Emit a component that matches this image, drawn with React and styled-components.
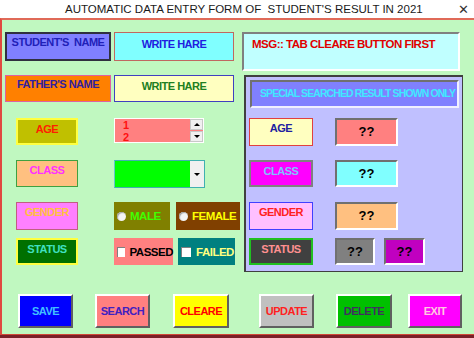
import React from "react";
import styled, { createGlobalStyle } from "styled-components";

const GlobalStyle = createGlobalStyle`
  body {
    margin: 0;
    background: #ffffff;
    font-family: "Liberation Sans", Arial, sans-serif;
  }
`;

const Window = styled.div`
  width: 474px;
  height: 338px;
  overflow: hidden;
  display: flex;
  flex-direction: column;
`;

const TitleBar = styled.div`
  height: 18px;
  display: flex;
  align-items: center;
  background: #ffffff;
`;

const Title = styled.div`
  flex: 1;
  padding-left: 65px;
  font-size: 11.5px;
  color: #1a1a1a;
  white-space: nowrap;
`;

const Close = styled.div`
  width: 22px;
  font-size: 13px;
  color: #333;
  text-align: center;
`;

const Form = styled.div`
  flex: 1;
  background: #c0f8c0;
  border-top: 2px solid #e06a58;
  border-left: 2px solid #e04a40;
  border-bottom: 1px solid #d04838;
  padding: 12px 0 0 3px;
  display: flex;
  flex-direction: column;
  font-weight: bold;
  font-size: 11px;
  letter-spacing: -0.5px;
`;

const BottomStrip = styled.div`
  height: 3px;
  background: #7a2028;
`;

const Main = styled.div`
  display: flex;
`;

const LeftCol = styled.div`
  width: 237px;
  display: flex;
  flex-direction: column;
`;

const RightCol = styled.div`
  width: 221px;
  display: flex;
  flex-direction: column;
`;

const Row = styled.div`
  display: flex;
  align-items: stretch;
  height: ${(p) => p.$h || 27}px;
  margin-top: ${(p) => p.$top || 0}px;
  padding-left: ${(p) => p.$indent || 0}px;
  gap: ${(p) => p.$gap || 3}px;
`;

const Box = styled.div`
  box-sizing: border-box;
  width: ${(p) => p.$w}px;
  background: ${(p) => p.$bg};
  border: ${(p) => p.$bw || 1}px solid ${(p) => p.$border};
  color: ${(p) => p.$color};
  text-align: center;
  padding-top: ${(p) => (p.$pt != null ? p.$pt : 3)}px;
  white-space: nowrap;
  overflow: hidden;
`;

const Spin = styled.div`
  box-sizing: border-box;
  width: 90px;
  height: 25px;
  display: flex;
  background: #ff8080;
  border: 1px solid #ffffff;
`;

const SpinText = styled.div`
  flex: 1;
  padding: 0 0 0 8px;
  color: #ff1010;
  font-size: 11px;
  line-height: 12px;
  overflow: hidden;
`;

const SpinButtons = styled.div`
  width: 13px;
  display: flex;
  flex-direction: column;
  gap: 1px;
`;

const SpinButton = styled.div`
  flex: 1;
  background: #f0f0f0;
  border: 1px solid #c8c8c8;
  display: flex;
  align-items: center;
  justify-content: center;
`;

const Tri = styled.div`
  width: 0;
  height: 0;
  border-left: 3px solid transparent;
  border-right: 3px solid transparent;
  ${(p) =>
    p.$up ? "border-bottom: 3px solid #000;" : "border-top: 3px solid #000;"}
`;

const Combo = styled.div`
  box-sizing: border-box;
  width: 91px;
  height: 28px;
  display: flex;
  background: #00ff00;
  border: 1px solid #40b0b0;
  border-left-color: #60c8c8;
`;

const ComboButton = styled.div`
  width: 14px;
  margin-left: auto;
  background: #f0f0f0;
  display: flex;
  align-items: center;
  justify-content: center;
`;

const Option = styled.div`
  box-sizing: border-box;
  width: ${(p) => p.$w}px;
  background: ${(p) => p.$bg};
  color: ${(p) => p.$color};
  display: flex;
  align-items: center;
  gap: 4px;
  padding-left: 3px;
  font-size: 11.5px;
  white-space: nowrap;
`;

const RadioDot = styled.span`
  width: 9px;
  height: 9px;
  border-radius: 50%;
  background: #f4f4f4;
  box-shadow: inset 1px 1px 1px #a0a0a0;
`;

const CheckSquare = styled.span`
  box-sizing: border-box;
  width: 10px;
  height: 10px;
  background: #ffffff;
  border-top: 1px solid #808080;
  border-left: 1px solid #808080;
  margin-right: 1px;
`;

const MsgBox = styled.div`
  box-sizing: border-box;
  width: 218px;
  height: 39px;
  background: #c0ffff;
  border: 2px solid #ffffff;
  border-top-color: #808080;
  border-left-color: #808080;
  color: #e00000;
  padding: 4px 0 0 8px;
  font-size: 11.5px;
`;

const Panel = styled.div`
  box-sizing: border-box;
  width: 219px;
  height: 197px;
  margin: 4px 0 0 2px;
  background: #c0c0ff;
  border: 1px solid #404040;
  border-top-width: 2px;
  border-left-width: 2px;
  padding: 3px 3px 0 2px;
  display: flex;
  flex-direction: column;
`;

const PanelHeader = styled.div`
  box-sizing: border-box;
  height: 28px;
  margin-left: 2px;
  background: #8080ff;
  border: 2px solid #f0f0ff;
  border-top-color: #707070;
  border-left-color: #707070;
  color: #40e8ff;
  padding: 5px 0 0 8px;
  font-size: 10.5px;
  letter-spacing: -0.9px;
  white-space: nowrap;
  overflow: hidden;
`;

const Value = styled.div`
  box-sizing: border-box;
  width: ${(p) => p.$w}px;
  background: ${(p) => p.$bg};
  border: 2px solid #ffffff;
  border-top-color: #707070;
  border-left-color: #707070;
  color: #000;
  font-size: 13px;
  text-align: center;
  padding-top: 4px;
  letter-spacing: 0;
`;

const ButtonBar = styled.div`
  display: flex;
  margin-top: 22px;
  height: 34px;
`;

const Button = styled.div`
  box-sizing: border-box;
  width: ${(p) => p.$w || 55}px;
  margin-left: ${(p) => p.$gap}px;
  background: ${(p) => p.$bg};
  color: ${(p) => p.$color};
  border: 2px solid #606060;
  border-top-color: #ffffff;
  border-left-color: #ffffff;
  display: flex;
  align-items: center;
  justify-content: center;
`;

const buttons = [
  { label: "SAVE", gap: 13, bg: "#0000ff", color: "#40c0ff" },
  { label: "SEARCH", gap: 22, bg: "#ff8080", color: "#4020c0" },
  { label: "CLEARE", gap: 23, bg: "#ffff00", color: "#ff0000", w: 56 },
  { label: "UPDATE", gap: 30, bg: "#c0c0c0", color: "#ff2020" },
  { label: "DELETE", gap: 22, bg: "#00c000", color: "#403060", w: 56 },
  { label: "EXIT", gap: 16, bg: "#ff00ff", color: "#ffc8e0", w: 54 },
];

export default function App() {
  return (
    <>
      <GlobalStyle />
      <Window>
        <TitleBar>
          <Title>AUTOMATIC DATA ENTRY FORM OF&nbsp; STUDENT'S RESULT IN 2021</Title>
          <Close>✕</Close>
        </TitleBar>
        <Form>
          <Main>
            <LeftCol>
              <Row $h={29}>
                <Box $w={106} $bg="#8080ff" $border="#303040" $bw={2} $color="#2020b8" $pt={2}>
                  STUDENT'S&nbsp; NAME
                </Box>
                <Box $w={120} $bg="#80ffff" $border="#c06860" $color="#2020e0" $pt={5}>
                  WRITE HARE
                </Box>
              </Row>
              <Row $h={27} $top={14}>
                <Box $w={106} $bg="#ff8000" $border="#e060a0" $color="#3020a0" $pt={2}>
                  FATHER'S NAME
                </Box>
                <Box $w={120} $bg="#ffffc0" $border="#4040c0" $color="#208020" $pt={4}>
                  WRITE HARE
                </Box>
              </Row>
              <Row $h={27} $top={16} $indent={11} $gap={36}>
                <Box $w={62} $bg="#c0c000" $border="#ffff40" $bw={2} $color="#ff2000">
                  AGE
                </Box>
                <Spin>
                  <SpinText>
                    1<br />2
                  </SpinText>
                  <SpinButtons>
                    <SpinButton><Tri $up /></SpinButton>
                    <SpinButton><Tri /></SpinButton>
                  </SpinButtons>
                </Spin>
              </Row>
              <Row $h={27} $top={15} $indent={11} $gap={36}>
                <Box $w={62} $bg="#ffc080" $border="#40a040" $color="#ff30ff">
                  CLASS
                </Box>
                <Combo>
                  <ComboButton><Tri /></ComboButton>
                </Combo>
              </Row>
              <Row $h={28} $top={15} $indent={11} $gap={36}>
                <Box $w={62} $bg="#ff80ff" $border="#c06080" $color="#ffc040">
                  GENDER
                </Box>
                <Row $h={28} $gap={6}>
                  <Option $w={56} $bg="#808000" $color="#40ff00">
                    <RadioDot />MALE
                  </Option>
                  <Option $w={64} $bg="#804000" $color="#ffff00">
                    <RadioDot />FEMALE
                  </Option>
                </Row>
              </Row>
              <Row $h={27} $top={8} $indent={11} $gap={36}>
                <Box $w={62} $bg="#007000" $border="#ffff40" $bw={2} $color="#40e0c0">
                  STATUS
                </Box>
                <Row $h={27} $gap={5}>
                  <Option $w={59} $bg="#ff8080" $color="#000000">
                    <CheckSquare />PASSED
                  </Option>
                  <Option $w={57} $bg="#008080" $color="#ffff80">
                    <CheckSquare />FAILED
                  </Option>
                </Row>
              </Row>
            </LeftCol>
            <RightCol>
              <MsgBox>MSG:: TAB CLEARE BUTTON FIRST</MsgBox>
              <Panel>
                <PanelHeader>SPECIAL SEARCHED RESULT SHOWN ONLY</PanelHeader>
                <Row $h={28} $top={10} $indent={1} $gap={22}>
                  <Box $w={64} $bg="#ffffc0" $border="#e04040" $color="#2020a0">
                    AGE
                  </Box>
                  <Value $w={63} $bg="#ff8080">??</Value>
                </Row>
                <Row $h={27} $top={14} $indent={1} $gap={22}>
                  <Box $w={64} $bg="#ff00ff" $border="#808080" $bw={2} $color="#80c0ff">
                    CLASS
                  </Box>
                  <Value $w={63} $bg="#80ffff">??</Value>
                </Row>
                <Row $h={28} $top={15} $indent={1} $gap={22}>
                  <Box $w={64} $bg="#ffc0ff" $border="#4040ff" $color="#ff2020">
                    GENDER
                  </Box>
                  <Value $w={63} $bg="#ffc080">??</Value>
                </Row>
                <Row $h={27} $top={8} $indent={1} $gap={22}>
                  <Box $w={64} $bg="#404040" $border="#20c020" $bw={2} $color="#ff9090">
                    STATUS
                  </Box>
                  <Row $h={27} $gap={9}>
                    <Value $w={40} $bg="#808080">??</Value>
                    <Value $w={41} $bg="#c000c0">??</Value>
                  </Row>
                </Row>
              </Panel>
            </RightCol>
          </Main>
          <ButtonBar>
            {buttons.map((b) => (
              <Button key={b.label} $gap={b.gap} $bg={b.bg} $color={b.color} $w={b.w}>
                {b.label}
              </Button>
            ))}
          </ButtonBar>
        </Form>
        <BottomStrip />
      </Window>
    </>
  );
}
